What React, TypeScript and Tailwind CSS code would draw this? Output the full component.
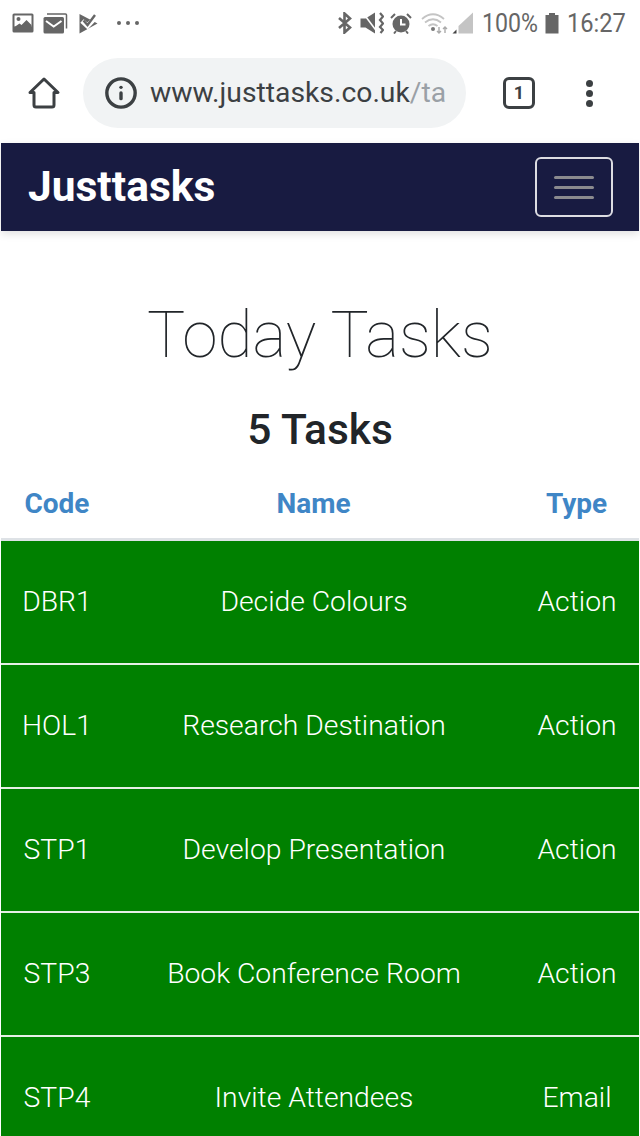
import { Info } from 'lucide-react';

const tasks = [
  { code: 'DBR1', name: 'Decide Colours', type: 'Action' },
  { code: 'HOL1', name: 'Research Destination', type: 'Action' },
  { code: 'STP1', name: 'Develop Presentation', type: 'Action' },
  { code: 'STP3', name: 'Book Conference Room', type: 'Action' },
  { code: 'STP4', name: 'Invite Attendees', type: 'Email' },
];

function StatusLeft() {
  return (
    <div className="flex items-center text-[#666]">
      {/* picture */}
      <svg width="22" height="20" viewBox="0 0 22 20">
        <rect x="0.500" y="0.500" width="21" height="19" rx="1.500" fill="currentColor" />
        <rect x="2.500" y="2.500" width="17" height="11" fill="#fff" />
        <circle cx="6.500" cy="6" r="2" fill="currentColor" />
        <path d="M2.500 14l5-3.500 2 1.500 5-5 5 5v6h-17z" fill="currentColor" />
      </svg>
      {/* mail stack */}
      <svg width="25" height="21" viewBox="0 0 25 21" className="ml-[9px]">
        <path d="M4 1h18.500a1 1 0 0 1 1 1v13.500" fill="none" stroke="currentColor" strokeWidth="1.500" />
        <rect x="0.500" y="4" width="20.500" height="16.500" rx="1.500" fill="currentColor" />
        <path d="M3 8l7.700 5.500L18.500 8" fill="none" stroke="#fff" strokeWidth="2" />
      </svg>
      {/* play store tasks */}
      <svg width="19" height="21" viewBox="0 0 19 21" className="ml-[11px]">
        <path d="M0.500 1l18 9.500-18 10z" fill="currentColor" />
        <path d="M3 8l5.500 5L18 3" fill="none" stroke="#fff" strokeWidth="5" />
        <path d="M4.500 7.500l4 4.500L16 2" fill="none" stroke="currentColor" strokeWidth="2.400" />
      </svg>
      <div className="ml-[19px] flex gap-[5px]">
        <span className="h-[4px] w-[4px] rounded-full bg-[#666]" />
        <span className="h-[4px] w-[4px] rounded-full bg-[#666]" />
        <span className="h-[4px] w-[4px] rounded-full bg-[#666]" />
      </div>
    </div>
  );
}

function StatusRight() {
  return (
    <div className="flex items-center text-[#666]">
      {/* bluetooth */}
      <svg width="15" height="22" viewBox="0 0 15 22">
        <path d="M2 6l11 9.500-5.500 5V1.500l5.500 5L2 16" fill="none" stroke="currentColor" strokeWidth="2.600" />
      </svg>
      {/* vibrate mute */}
      <svg width="24" height="22" viewBox="0 0 24 22" className="ml-[8px]">
        <path d="M0.500 6.500h5L15 0.500v21L5.500 15.500h-5z" fill="currentColor" />
        <path d="M3 1l13.500 18" stroke="#fff" strokeWidth="1.500" />
        <path d="M20 1l3 3.500-3 3.500 3 3.500-3 3.500 3 3-2.500 3" fill="none" stroke="currentColor" strokeWidth="2.200" />
      </svg>
      {/* alarm */}
      <svg width="22" height="22" viewBox="0 0 22 22" className="ml-[6px]">
        <circle cx="11" cy="12" r="8.500" fill="currentColor" />
        <path d="M11 7v5.500h4.500" fill="none" stroke="#fff" strokeWidth="2" />
        <path d="M1 6l4-4M21 6l-4-4M4 21.500l2-2.500M18 21.500L16 19" stroke="currentColor" strokeWidth="2" />
      </svg>
      {/* wifi */}
      <svg width="30" height="22" viewBox="0 0 30 22" className="ml-[9px]">
        <path d="M1 7c7-6 15-6 22 0M4 10.500c5-4 11-4 16 0M7.500 14c3-2.400 6-2.400 9 0" fill="none" stroke="#c4c4c4" strokeWidth="1.800" />
        <circle cx="12" cy="17" r="2" fill="#777" />
        <path d="M18 15v6M16 19l2 2 2-2M24 21v-6M22 17l2-2 2 2" fill="none" stroke="#aaa" strokeWidth="1.400" />
      </svg>
      {/* signal */}
      <svg width="21" height="22" viewBox="0 0 21 22" className="ml-px">
        <path d="M6.500 21.500V14L21 0.500v21z" fill="#c4c4c4" />
        <path d="M0.500 21.500l4-4v4z" fill="#444" />
      </svg>
      <span className="ml-[9px] w-[55px] origin-left scale-x-[0.89] whitespace-nowrap text-[26px] leading-none">100%</span>
      <svg width="14" height="22" viewBox="0 0 14 22" className="ml-[8px]">
        <path d="M4 1h6v2h3.500v18.500H.5V3H4z" fill="currentColor" />
      </svg>
      <span className="ml-[8px] w-[58px] origin-left scale-x-[0.91] whitespace-nowrap text-[26px] leading-none">16:27</span>
    </div>
  );
}

export default function App() {
  return (
    <div className="h-[1136px] w-[640px] overflow-hidden bg-white font-['Roboto',sans-serif]">
      {/* Android status bar */}
      <div className="flex h-[46px] items-center justify-between pl-[12px] pr-[15px]">
        <StatusLeft />
        <StatusRight />
      </div>

      {/* Chrome toolbar */}
      <div className="flex h-[97px] items-center pb-[3px]">
        <svg width="34" height="34" viewBox="0 0 34 34" className="ml-[27px] text-[#3c4043]">
          <path d="M3 16.500L17 3l14 13.500h-4V29a2 2 0 0 1-2 2H9a2 2 0 0 1-2-2V16.500z" fill="none" stroke="currentColor" strokeWidth="3" strokeLinejoin="round" />
        </svg>
        <div className="ml-[22px] flex h-[70px] w-[383px] items-center overflow-hidden rounded-full bg-[#f1f3f4] pl-[21px]">
          <Info size={34} strokeWidth={2.4} className="shrink-0 text-[#3c4043]" />
          <span className="ml-[12px] whitespace-nowrap text-[28.300px] leading-none text-[#3c4043]">
            www.justtasks.co.uk<span className="text-[#9aa0a6]">/ta</span>
          </span>
        </div>
        <div className="ml-[37px] flex h-[32px] w-[32px] items-center justify-center rounded-[6px] border-[3px] border-[#3c4043] text-[18px] font-bold leading-none text-[#3c4043]">
          1
        </div>
        <div className="ml-[51px] flex flex-col gap-[3px]">
          <span className="h-[7px] w-[7px] rounded-full bg-[#3c4043]" />
          <span className="h-[7px] w-[7px] rounded-full bg-[#3c4043]" />
          <span className="h-[7px] w-[7px] rounded-full bg-[#3c4043]" />
        </div>
      </div>

      {/* Navbar */}
      <div className="mx-px flex h-[88px] items-center justify-between bg-[#181b41] pl-[27px] pr-[26px] shadow-[0_3px_8px_rgba(0,0,0,0.12)]">
        <span className="text-[42.500px] font-bold leading-none text-white">Justtasks</span>
        <button className="flex h-[60px] w-[78px] flex-col items-center justify-center gap-[7px] rounded-[6px] border-2 border-[#dcdce2]">
          <span className="h-[3px] w-[40px] rounded-full bg-[#8a8a8e]" />
          <span className="h-[3px] w-[40px] rounded-full bg-[#8a8a8e]" />
          <span className="h-[3px] w-[40px] rounded-full bg-[#8a8a8e]" />
        </button>
      </div>

      {/* Heading */}
      <h1 className="mt-[62px] text-center text-[64px] font-thin leading-[86px] text-[#212529]">Today Tasks</h1>
      <h2 className="mt-[26px] text-center text-[42.500px] font-medium leading-[50px] text-[#212529]">5 Tasks</h2>

      {/* Task table */}
      <div className="mt-[34px] grid grid-cols-[112px_401px_1fr] items-center pb-[19px] pl-px pr-px text-center text-[28px] font-bold leading-[30px] text-[#3f86c6]">
        <span>Code</span>
        <span>Name</span>
        <span>Type</span>
      </div>
      <div className="mx-px border-t-[3px] border-[#dee2e6]">
        {tasks.map(task => (
          <div
            key={task.code}
            className="grid h-[124px] grid-cols-[112px_402px_1fr] items-center border-b-2 border-[#e6efe6] bg-[#008000] text-center text-[28.300px] font-light text-white"
          >
            <span>{task.code}</span>
            <span>{task.name}</span>
            <span>{task.type}</span>
          </div>
        ))}
      </div>
    </div>
  );
}
